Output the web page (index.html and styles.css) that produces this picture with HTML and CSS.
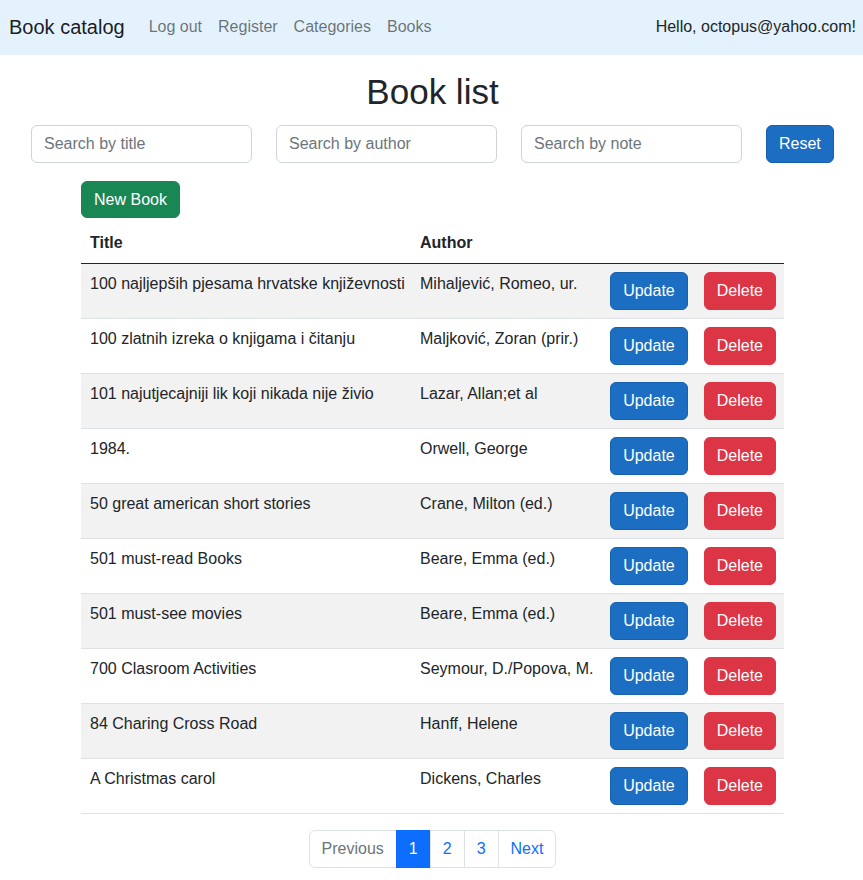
FILE: index.html
```html
<!DOCTYPE html>
<html lang="en">
<head>
<meta charset="utf-8">
<title>Book list</title>
<link rel="stylesheet" href="styles.css">
</head>
<body>
<nav class="navbar">
  <a class="brand" href="#">Book catalog</a>
  <ul class="nav-links">
    <li><a href="#">Log out</a></li>
    <li><a href="#">Register</a></li>
    <li><a href="#">Categories</a></li>
    <li><a href="#">Books</a></li>
  </ul>
  <span class="hello">Hello, octopus@yahoo.com!</span>
</nav>
<main class="main">
  <h1 class="title">Book list</h1>
  <div class="search-row">
    <input class="form-control" type="text" placeholder="Search by title">
    <input class="form-control" type="text" placeholder="Search by author">
    <input class="form-control" type="text" placeholder="Search by note">
    <button class="btn btn-primary">Reset</button>
  </div>
  <div class="content">
    <button class="btn btn-success new-book">New Book</button>
    <table class="table">
      <thead>
        <tr><th class="col-title">Title</th><th class="col-author">Author</th><th></th><th></th></tr>
      </thead>
      <tbody>
        <tr><td class="t">100 najljepših pjesama hrvatske književnosti</td><td>Mihaljević, Romeo, ur.</td><td class="act"><button class="btn btn-primary">Update</button></td><td class="act"><button class="btn btn-danger">Delete</button></td></tr>
        <tr><td class="t">100 zlatnih izreka o knjigama i čitanju</td><td>Maljković, Zoran (prir.)</td><td class="act"><button class="btn btn-primary">Update</button></td><td class="act"><button class="btn btn-danger">Delete</button></td></tr>
        <tr><td class="t">101 najutjecajniji lik koji nikada nije živio</td><td>Lazar, Allan;et al</td><td class="act"><button class="btn btn-primary">Update</button></td><td class="act"><button class="btn btn-danger">Delete</button></td></tr>
        <tr><td class="t">1984.</td><td>Orwell, George</td><td class="act"><button class="btn btn-primary">Update</button></td><td class="act"><button class="btn btn-danger">Delete</button></td></tr>
        <tr><td class="t">50 great american short stories</td><td>Crane, Milton (ed.)</td><td class="act"><button class="btn btn-primary">Update</button></td><td class="act"><button class="btn btn-danger">Delete</button></td></tr>
        <tr><td class="t">501 must-read Books</td><td>Beare, Emma (ed.)</td><td class="act"><button class="btn btn-primary">Update</button></td><td class="act"><button class="btn btn-danger">Delete</button></td></tr>
        <tr><td class="t">501 must-see movies</td><td>Beare, Emma (ed.)</td><td class="act"><button class="btn btn-primary">Update</button></td><td class="act"><button class="btn btn-danger">Delete</button></td></tr>
        <tr><td class="t">700 Clasroom Activities</td><td>Seymour, D./Popova, M.</td><td class="act"><button class="btn btn-primary">Update</button></td><td class="act"><button class="btn btn-danger">Delete</button></td></tr>
        <tr><td class="t">84 Charing Cross Road</td><td>Hanff, Helene</td><td class="act"><button class="btn btn-primary">Update</button></td><td class="act"><button class="btn btn-danger">Delete</button></td></tr>
        <tr><td class="t">A Christmas carol</td><td>Dickens, Charles</td><td class="act"><button class="btn btn-primary">Update</button></td><td class="act"><button class="btn btn-danger">Delete</button></td></tr>
      </tbody>
    </table>
    <ul class="pagination">
      <li class="page-item disabled"><a class="page-link" href="#">Previous</a></li>
      <li class="page-item active"><a class="page-link" href="#">1</a></li>
      <li class="page-item"><a class="page-link" href="#">2</a></li>
      <li class="page-item"><a class="page-link" href="#">3</a></li>
      <li class="page-item"><a class="page-link" href="#">Next</a></li>
    </ul>
  </div>
</main>
</body>
</html>
```

FILE: styles.css
```css
* { box-sizing: border-box; }
html, body { margin: 0; padding: 0; }
body {
  font-family: "Liberation Sans", Arial, sans-serif;
  font-size: 16px;
  line-height: 1.5;
  color: #212529;
  background: #fff;
}
a { text-decoration: none; }

.navbar {
  display: flex;
  align-items: center;
  height: 55px;
  background: #e3f2fd;
  padding: 0 7px 2px 9px;
}
.brand {
  font-size: 20px;
  line-height: 30px;
  color: rgba(0,0,0,.9);
  margin-right: 16px;
}
.nav-links {
  display: flex;
  list-style: none;
  margin: 0;
  padding: 0;
  flex: 1;
}
.nav-links a {
  display: block;
  padding: 8px 8px;
  color: rgba(0,0,0,.55);
}
.hello { color: #212529; }

.main { padding: 0; }
.title {
  font-size: 35px;
  font-weight: 500;
  line-height: 42px;
  text-align: center;
  margin: 16px 0 12px 2px;
}
.search-row {
  display: flex;
  gap: 24px;
  padding: 0 31px;
}
.form-control {
  width: 221px;
  height: 38px;
  padding: 6px 12px;
  font: inherit;
  font-size: 16px;
  color: #212529;
  border: 1px solid #ced4da;
  border-radius: 6px;
  background: #fff;
}
.form-control::placeholder { color: #6c757d; }

.btn {
  display: inline-block;
  font: inherit;
  font-size: 16px;
  line-height: 24px;
  padding: 6px 12px;
  border: 1px solid transparent;
  border-radius: 6px;
  color: #fff;
  cursor: pointer;
}
.btn-primary { background: #1b6ec2; border-color: #1861ac; }
.btn-success { background: #198754; border-color: #198754; }
.btn-danger { background: #dc3545; border-color: #dc3545; }

.content {
  width: 703px;
  margin: 18px 0 0 81px;
}
.new-book { display: block; height: 37px; line-height: 23px; }

.table {
  width: 100%;
  border-collapse: collapse;
  margin-top: 5px;
  margin-bottom: 16px;
}
.table th {
  text-align: left;
  font-weight: 700;
  padding: 8px;
  border-bottom: 1px solid #212529;
}
.table th.col-title { padding-left: 9px; padding-right: 7px; }
.table td {
  padding: 8px;
  vertical-align: top;
  border-bottom: 1px solid #dee2e6;
  white-space: nowrap;
}
.table td.t { padding-left: 9px; padding-right: 7px; }
.table tbody tr:nth-child(odd) td { background: #f2f2f2; }
.col-title { width: 330px; }
.col-author { width: 190px; }
.table td.act { width: 1%; }
.table td.act .btn { height: 38px; }

.pagination {
  display: flex;
  justify-content: center;
  list-style: none;
  margin: 0;
  padding: 0;
}
.page-link {
  display: block;
  padding: 6px 12px;
  line-height: 24px;
  color: #0d6efd;
  background: #fff;
  border: 1px solid #dee2e6;
  margin-left: -1px;
}
.page-item:first-child .page-link { border-radius: 6px 0 0 6px; margin-left: 0; }
.page-item:last-child .page-link { border-radius: 0 6px 6px 0; }
.page-item.disabled .page-link { color: #6c757d; }
.page-item.active .page-link { color: #fff; background: #0d6efd; border-color: #0d6efd; }
```
